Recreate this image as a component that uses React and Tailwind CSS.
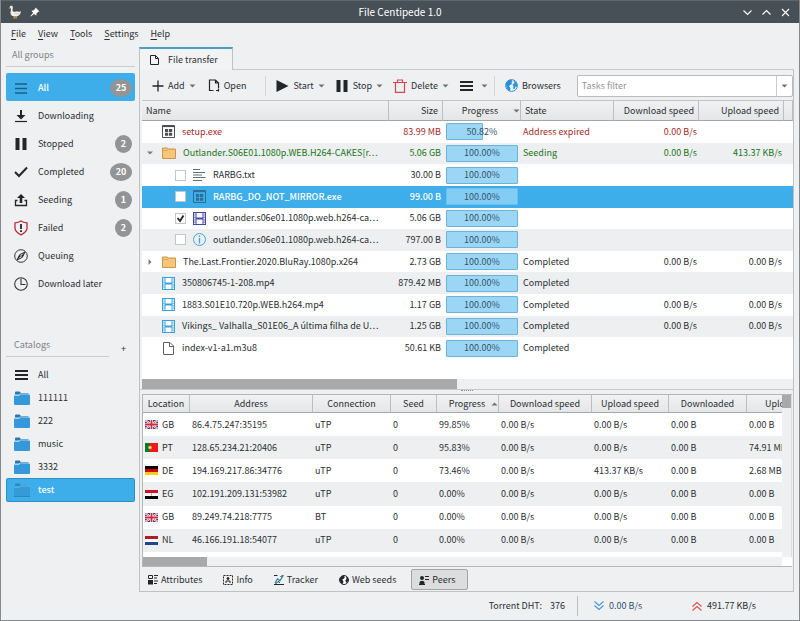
import React from 'react';
import clsx from 'clsx';

const GROUPS = [
  { name: 'All', icon: MenuIcon, count: 25, active: true },
  { name: 'Downloading', icon: DownloadIcon },
  { name: 'Stopped', icon: PauseIcon, count: 2 },
  { name: 'Completed', icon: CheckIcon, count: 20 },
  { name: 'Seeding', icon: SeedIcon, count: 1 },
  { name: 'Failed', icon: ShieldIcon, count: 2 },
  { name: 'Queuing', icon: CompassIcon },
  { name: 'Download later', icon: ClockIcon },
];

const CATALOGS = [
  { name: 'All', icon: BoldMenuIcon },
  { name: '111111', icon: BlueFolderIcon },
  { name: '222', icon: BlueFolderIcon },
  { name: 'music', icon: BlueFolderIcon },
  { name: '3332', icon: BlueFolderIcon },
  { name: 'test', icon: BlueFolderIcon, active: true },
];

const TASKS = [
  { name: 'setup.exe', icon: ExeIcon, size: '83.99 MB', progress: 50.82, state: 'Address expired', down: '0.00 B/s', color: 'text-[#a52a2a]' },
  { name: 'Outlander.S06E01.1080p.WEB.H264-CAKES[r⋯', icon: FolderIcon, arrow: 'down', size: '5.06 GB', progress: 100, state: 'Seeding', down: '0.00 B/s', up: '413.37 KB/s', color: 'text-[#1b741b]' },
  { name: 'RARBG.txt', icon: TextIcon, child: true, size: '30.00 B', progress: 100 },
  { name: 'RARBG_DO_NOT_MIRROR.exe', icon: ExeIcon, child: true, selected: true, size: '99.00 B', progress: 100 },
  { name: 'outlander.s06e01.1080p.web.h264-ca⋯', icon: DarkFilmIcon, child: true, checked: true, size: '5.06 GB', progress: 100 },
  { name: 'outlander.s06e01.1080p.web.h264-ca⋯', icon: InfoIcon, child: true, size: '797.00 B', progress: 100 },
  { name: 'The.Last.Frontier.2020.BluRay.1080p.x264', icon: FolderIcon, arrow: 'right', size: '2.73 GB', progress: 100, state: 'Completed', down: '0.00 B/s', up: '0.00 B/s' },
  { name: '350806745-1-208.mp4', icon: FilmIcon, size: '879.42 MB', progress: 100, state: 'Completed' },
  { name: '1883.S01E10.720p.WEB.h264.mp4', icon: FilmIcon, size: '1.17 GB', progress: 100, state: 'Completed', down: '0.00 B/s', up: '0.00 B/s' },
  { name: 'Vikings_ Valhalla_S01E06_A última filha de U⋯', icon: FilmIcon, size: '1.25 GB', progress: 100, state: 'Completed', down: '0.00 B/s', up: '0.00 B/s' },
  { name: 'index-v1-a1.m3u8', icon: PageIcon, size: '50.61 KB', progress: 100, state: 'Completed' },
];

const PEERS = [
  ['GB', '86.4.75.247:35195', 'uTP', '0', '99.85%', '0.00 B/s', '0.00 B/s', '0.00 B', '0.00 B'],
  ['PT', '128.65.234.21:20406', 'uTP', '0', '95.83%', '0.00 B/s', '0.00 B/s', '0.00 B', '74.91 MB'],
  ['DE', '194.169.217.86:34776', 'uTP', '0', '73.46%', '0.00 B/s', '413.37 KB/s', '0.00 B', '2.68 MB'],
  ['EG', '102.191.209.131:53982', 'uTP', '0', '0.00%', '0.00 B/s', '0.00 B/s', '0.00 B', '0.00 B'],
  ['GB', '89.249.74.218:7775', 'BT', '0', '0.00%', '0.00 B/s', '0.00 B/s', '0.00 B', '0.00 B'],
  ['NL', '46.166.191.18:54077', 'uTP', '0', '0.00%', '0.00 B/s', '0.00 B/s', '0.00 B', '0.00 B'],
];

const DETAIL_TABS = [
  { name: 'Attributes', icon: AttributesIcon },
  { name: 'Info', icon: CardIcon },
  { name: 'Tracker', icon: TrackerIcon },
  { name: 'Web seeds', icon: DarkGlobeIcon },
  { name: 'Peers', icon: PeersIcon, active: true },
];

const App = () => (
  <div className="min-h-screen flex flex-col bg-[#eff0f1] border-l border-r border-b border-[#85898c] text-[#2b2f33] text-[9px] leading-4 font-['Noto_Sans_CJK_SC','Noto_Sans',sans-serif] whitespace-nowrap cursor-default">
    <TitleBar />
    <MenuBar />
    <div className="flex-1 flex">
      <Sidebar />
      <main className="flex-1 min-w-0 flex flex-col pr-[5px]">
        <div className="flex">
          <button className="h-[23px] w-[94px] flex items-center gap-1.5 pl-2 border-t-2 border-t-[#4a9fc0] border-x border-x-[#bfc1c3] bg-[#f2f3f4]">
            <PageTabIcon />
            File transfer
          </button>
          <div className="flex-1 border-b border-[#c6c8ca]" />
        </div>
        <div className="flex-1 flex flex-col border-x border-b border-[#bfc1c3]">
          <Toolbar />
          <TaskTable />
          <div className="h-[5px] flex justify-center border-t border-[#c6c8ca]">
            <span className="w-3 h-px border-t border-dotted border-[#8b8f92]" />
          </div>
          <PeerTable />
          <DetailTabs />
        </div>
      </main>
    </div>
    <StatusBar />
  </div>
);

function TitleBar() {
  return (
    <header className="h-[23px] grid grid-cols-3 items-center bg-[#475057] border-t border-[#5c656b] text-white">
      <div className="flex items-center gap-2 pl-[7px]">
        <GooseIcon />
        <PinIcon />
      </div>
      <h1 className="text-center text-[10px]">File Centipede 1.0</h1>
      <div className="flex justify-end gap-2 pr-2">
        <WindowButton label="Minimize" d="M1.500 3.500 5.500 7.500 9.500 3.500" />
        <WindowButton label="Maximize" d="M1.500 7.500 5.500 3.500 9.500 7.500" />
        <WindowButton label="Close" d="M2 2 9 9M9 2 2 9" />
      </div>
    </header>
  );
}

function WindowButton({ label, d }) {
  return (
    <button aria-label={label}>
      <svg width="11" height="11" viewBox="0 0 11 11" fill="none" stroke="#fff" strokeWidth="1.1">
        <path d={d} />
      </svg>
    </button>
  );
}

function MenuBar() {
  return (
    <nav className="h-6 flex items-center gap-3 pl-2.5 pb-[3px]">
      {['File', 'View', 'Tools', 'Settings', 'Help'].map((item) => (
        <button key={item}>
          <span className="underline underline-offset-2">{item[0]}</span>
          {item.slice(1)}
        </button>
      ))}
    </nav>
  );
}

function Sidebar() {
  return (
    <aside className="w-[138px] shrink-0 pl-[5px] pr-1">
      <h2 className="h-5 pl-1.5 border-b border-[#c9cbcd] text-[#808487]">All groups</h2>
      <ul className="mt-1.5">
        {GROUPS.map(({ name, icon: Icon, count, active }) => (
          <li key={name}>
            <button
              className={clsx(
                'w-full h-7 flex items-center gap-2.5 pl-2 pr-[3px] pt-px rounded-xs',
                active && 'bg-[#3daee9] text-white font-medium'
              )}
            >
              <Icon />
              <span className="flex-1 text-left">{name}</span>
              {count && (
                <span
                  className={clsx(
                    'h-[18px] grid place-items-center rounded-[50%] bg-[#939495] text-white font-bold',
                    count > 9 ? 'w-[22px]' : 'w-[17px]'
                  )}
                >
                  {count}
                </span>
              )}
            </button>
          </li>
        ))}
      </ul>
      <div className="mt-10 flex items-end">
        <h2 className="w-[103px] h-5 pl-2 border-b border-[#c9cbcd] text-[#808487]">Catalogs</h2>
        <button className="ml-3" aria-label="Add catalog">+</button>
      </div>
      <ul className="mt-1.5">
        {CATALOGS.map(({ name, icon: Icon, active }) => (
          <li key={name}>
            <button
              className={clsx(
                'w-full flex items-center gap-2 pl-[7px] rounded-xs',
                active ? 'h-6 bg-[#3daee9] border border-[#2f8fc4] text-white font-medium' : 'h-[23px] border-x border-transparent'
              )}
            >
              <span className="w-4">
                <Icon dim={active} />
              </span>
              {name}
            </button>
          </li>
        ))}
      </ul>
    </aside>
  );
}

function Toolbar() {
  return (
    <div className="h-[30px] flex items-center pl-3 pt-px">
      <ToolButton icon={PlusIcon} label="Add" menu />
      <ToolButton icon={OpenIcon} label="Open" className="ml-3" />
      <Separator className="ml-[19px]" />
      <ToolButton icon={PlayIcon} label="Start" menu className="ml-2.5" />
      <ToolButton icon={PauseIcon} label="Stop" menu className="ml-2.5" />
      <ToolButton icon={TrashIcon} label="Delete" menu className="ml-2.5" />
      <button className="ml-2.5 flex items-center gap-2" aria-label="Priority">
        <BoldMenuIcon />
        <Caret />
      </button>
      <Separator className="ml-1.5" />
      <ToolButton icon={GlobeIcon} label="Browsers" className="ml-2.5" />
      <div className="ml-4 flex-1 flex h-[22px] border border-[#b9bcbe] rounded-xs bg-white">
        <input
          className="flex-1 min-w-0 px-1 outline-none placeholder:text-[#92969a]"
          placeholder="Tasks filter"
          aria-label="Tasks filter"
        />
        <button className="w-4 grid place-items-center border-l border-[#c9cbcd]" aria-label="Filter history">
          <Caret />
        </button>
      </div>
    </div>
  );
}

function ToolButton({ icon: Icon, label, menu, className }) {
  return (
    <button className={clsx('flex items-center gap-1', className)}>
      <Icon />
      {label}
      {menu && <Caret />}
    </button>
  );
}

function Separator({ className }) {
  return <span className={clsx('w-px h-5 bg-[#d3d5d7]', className)} />;
}

const taskHead = 'h-[21px] font-normal border-r border-b border-t border-r-[#bcbfc1] border-b-[#a3a6a8] border-t-[#c3c5c7]';

function TaskTable() {
  return (
    <div className="flex-1 flex flex-col ml-0.5 bg-white">
      <table className="w-full h-[259px] table-fixed border-separate border-spacing-0">
        <colgroup>
          <col />
          <col className="w-[54px]" />
          <col className="w-[78px]" />
          <col className="w-[93px]" />
          <col className="w-[85px]" />
          <col className="w-[85px]" />
          <col className="w-[9px]" />
        </colgroup>
        <thead className="bg-linear-to-b from-[#f1f2f3] to-[#e3e5e6]">
          <tr>
            <th className={clsx(taskHead, 'pl-1 text-left')}>Name</th>
            <th className={clsx(taskHead, 'pr-1 text-right')}>Size</th>
            <th className={taskHead}>
              <span className="flex items-center">
                <span className="flex-1 pl-1">Progress</span>
                <Caret />
              </span>
            </th>
            <th className={clsx(taskHead, 'pl-1 text-left')}>State</th>
            <th className={clsx(taskHead, 'pr-1 text-right')}>Download speed</th>
            <th className={clsx(taskHead, 'pr-1 text-right')}>Upload speed</th>
            <th className={taskHead} />
          </tr>
        </thead>
        <tbody>
          {TASKS.map((task, i) => (
            <TaskRow key={i} id={`task-${i}`} task={task} />
          ))}
        </tbody>
      </table>
      <div className="flex-1" />
      <div className="h-2.5 bg-[#eff0f1]">
        <div className="h-full w-[315px] bg-[#a9a9a9]" />
      </div>
    </div>
  );
}

function TaskRow({ id, task }) {
  const { name, icon: Icon, arrow, child, checked, selected, size, progress, state, down, up, color } = task;
  return (
    <tr className={clsx(selected ? 'bg-[#3daee9] text-white font-medium' : 'even:bg-[#edeff0]', color)}>
      <td className="p-0">
        <div className={clsx('flex items-center', child ? 'pl-[33px]' : 'pl-1')}>
          {child ? (
            <span className="grid mr-[7px]">
              <input
                id={id}
                type="checkbox"
                defaultChecked={checked}
                className="peer col-start-1 row-start-1 appearance-none size-[11px] bg-white border border-[#c3c6c9]"
              />
              <svg className="col-start-1 row-start-1 hidden peer-checked:block pointer-events-none" width="11" height="11" fill="none" stroke="#222" strokeWidth="1.8">
                <path d="M2.500 5 5 8 8.500 2.500" />
              </svg>
            </span>
          ) : (
            <span className="w-4 shrink-0">{arrow && <TreeArrow dir={arrow} />}</span>
          )}
          <Icon dim={selected} />
          <label htmlFor={child ? id : undefined} className="pl-[7px]">{name}</label>
        </div>
      </td>
      <td className="p-0 pr-0.5 text-right">{size}</td>
      <td className="p-0 px-[3px]">
        <div className="grid w-[72px] h-[17px] items-center">
          <span
            className={clsx(
              'col-start-1 row-start-1 h-full border rounded-[1px]',
              selected ? 'bg-[#83cdf5] border-[#6cc0ee]' : 'bg-[#9bd7f5] border-[#6cb3dc]'
            )}
            style={{ width: `${progress}%` }}
          />
          <span className="col-start-1 row-start-1 text-center font-normal text-[#34536b]">{progress.toFixed(2)}%</span>
        </div>
      </td>
      <td className="p-0 pl-0.5">{state}</td>
      <td className="p-0 pr-0.5 text-right">{down}</td>
      <td className="p-0 pr-0.5 text-right">{up}</td>
      <td className="p-0" />
    </tr>
  );
}

const peerHead = 'h-[18px] p-0 font-normal border-r border-b border-r-[#bcbfc1] border-b-[#a3a6a8]';

function PeerTable() {
  return (
    <div className="ml-0.5 mr-px flex flex-col border-l border-t border-b border-[#b4b7b9] bg-white">
      <div className="flex">
        <div className="flex-1 min-w-0 h-[162px] overflow-hidden">
          <table className="w-full min-w-[682px] h-[157px] table-fixed border-separate border-spacing-0">
            <colgroup>
              <col className="w-[47px]" />
              <col className="w-[123px]" />
              <col className="w-[78px]" />
              <col className="w-[46px]" />
              <col className="w-[62px]" />
              <col className="w-[93px]" />
              <col className="w-[77px]" />
              <col className="w-[78px]" />
              <col className="w-[78px]" />
            </colgroup>
            <thead className="bg-linear-to-b from-[#f1f2f3] to-[#e3e5e6]">
              <tr>
                <th className={peerHead}>Location</th>
                <th className={peerHead}>Address</th>
                <th className={peerHead}>Connection</th>
                <th className={peerHead}>Seed</th>
                <th className={peerHead}>
                  <span className="flex items-center">
                    <span className="flex-1 pl-1.5">Progress</span>
                    <Caret up />
                  </span>
                </th>
                <th className={peerHead}>Download speed</th>
                <th className={peerHead}>Upload speed</th>
                <th className={peerHead}>Downloaded</th>
                <th className={peerHead}>Uploaded</th>
              </tr>
            </thead>
            <tbody>
              {PEERS.map(([country, ...cells]) => (
                <tr key={cells[0]} className="even:bg-[#edeff0]">
                  <td className="p-0 pl-0.5">
                    <span className="flex items-center gap-1">
                      <Flag country={country} />
                      {country}
                    </span>
                  </td>
                  {cells.map((cell, i) => (
                    <td key={i} className="p-0 pl-0.5">{cell}</td>
                  ))}
                </tr>
              ))}
            </tbody>
          </table>
        </div>
        <div className="w-2.5 bg-[#eff0f1] border-r border-[#dcdee0]">
          <div className="h-[13px] bg-[#a9a9a9]" />
        </div>
      </div>
      <div className="h-[9px] bg-[#eff0f1] flex justify-between">
        <div className="w-16 bg-[#a9a9a9]" />
        <div className="w-2.5 bg-white" />
      </div>
    </div>
  );
}

function DetailTabs() {
  return (
    <div className="h-6 flex items-center gap-1 pl-0.5 pt-px">
      {DETAIL_TABS.map(({ name, icon: Icon, active }) => (
        <button
          key={name}
          className={clsx(
            'h-[21px] flex items-center gap-[3px] border rounded-xs',
            active ? 'pl-[7px] pr-3 bg-[#dcddde] border-[#a2a5a7]' : 'pl-[5px] pr-2.5 border-transparent'
          )}
        >
          <Icon />
          {name}
        </button>
      ))}
    </div>
  );
}

function StatusBar() {
  return (
    <footer className="h-7 flex items-center justify-end pr-[43px]">
      <span>Torrent DHT:</span>
      <span className="ml-2">376</span>
      <span className="ml-3 w-px h-5 bg-[#bcbfc1]" />
      <span className="ml-4 flex items-center gap-[5px] w-[98px] text-[#2b5478]">
        <DoubleChevron color="#3d9bd1" />
        0.00 B/s
      </span>
      <span className="flex items-center gap-[5px]">
        <DoubleChevron color="#d9534f" up />
        491.77 KB/s
      </span>
    </footer>
  );
}

/* ---- small glyphs ---- */

function Caret({ up }) {
  return (
    <svg className="shrink-0" width="7" height="4" viewBox="0 0 7 4" fill="#6f7376">
      <path d={up ? 'M.5 3.500h6l-3-3z' : 'M.5 .5h6l-3 3z'} />
    </svg>
  );
}

function TreeArrow({ dir }) {
  return (
    <svg width="8" height="8" viewBox="0 0 8 8" fill="#777b7e">
      <path d={dir === 'down' ? 'M1 2.500h6l-3 3z' : 'M2.500 1v6l3-3z'} />
    </svg>
  );
}

function DoubleChevron({ color, up }) {
  return (
    <svg width="10" height="10" viewBox="0 0 10 10" fill="none" stroke={color} strokeWidth="1.1">
      <path d={up ? 'M.5 5.500 5 1.500 9.500 5.500M.5 9.500 5 5.500 9.500 9.500' : 'M.5 .5 5 4.500 9.500 .5M.5 4.500 5 8.500 9.500 4.500'} />
    </svg>
  );
}

/* ---- icons ---- */

function Svg({ children, w = 14, h = 14, ...rest }) {
  return (
    <svg className="shrink-0" width={w} height={h} viewBox={`0 0 ${w} ${h}`} fill="none" {...rest}>
      {children}
    </svg>
  );
}

function GooseIcon() {
  return (
    <Svg>
      <path d="M1.800 2C2 .3 4.600.3 4.800 2 5 4 4 5.500 5 6.500c1.800.6 4-.2 5.500.2 1 .3 1.800 0 2.500-.4-.2 2.700-2 5-5 5.200C5 11.700 2.500 10.500 2.500 8c0-2 .8-3 .3-4.500z" fill="#f3efe4" />
      <path d="M2 2 .3 3.200 2.400 3.800z" fill="#e8943a" />
      <path d="M6.500 11.300v1.700H5M8.500 11.300v1.700H7" stroke="#e8943a" />
      <path d="M6.500 8.300c1.500 1 3.500.8 5-.3" stroke="#c9c2b2" strokeWidth=".8" />
    </Svg>
  );
}

function PinIcon() {
  return (
    <Svg w={10} h={10}>
      <path d="M5.500.5 9.500 4.500 8.300 4.800 6.500 6.600 6.300 8.500 3.900 6.900 1 9.500.5 9 3.100 6.100 1.500 3.700l1.900-.2L5.200 1.700z" fill="#fff" />
    </Svg>
  );
}

function PageTabIcon() {
  return (
    <Svg w={14} h={12} stroke="#222">
      <path d="M2.500 1.500h5l3 3v6h-8zM7.500 1.500v3h3" />
    </Svg>
  );
}

function MenuIcon() {
  return (
    <Svg stroke="#1c5f86" strokeWidth="1.3">
      <path d="M1 3h12M1 7.500h12M1 12h12" />
    </Svg>
  );
}

function BoldMenuIcon() {
  return (
    <Svg stroke="#232629" strokeWidth="2">
      <path d="M1 3h13M1 7h13M1 11h13" />
    </Svg>
  );
}

function DownloadIcon() {
  return (
    <Svg>
      <path d="M6 1h2v5h3.500L7 10.500 2.500 6H6z" fill="#232629" />
      <path d="M1 12.500h12" stroke="#232629" strokeWidth="1.200" />
    </Svg>
  );
}

function PauseIcon() {
  return (
    <Svg>
      <path d="M1.500 1H5.500V13H1.500zM8.500 1H12.500V13H8.500z" fill="#232629" />
    </Svg>
  );
}

function CheckIcon() {
  return (
    <Svg stroke="#232629" strokeWidth="2">
      <path d="M1 7 5 11 13 2.500" />
    </Svg>
  );
}

function SeedIcon() {
  return (
    <Svg>
      <path d="M7 1 11 5H8.300V10H5.700V5H3z" fill="#232629" />
      <path d="M3.500 7.500h-2v5h11v-5h-2" stroke="#232629" strokeWidth="1.300" />
    </Svg>
  );
}

function ShieldIcon() {
  return (
    <Svg h={16}>
      <path d="M7 1c1.800 1.300 3.800 1.700 6 1.800V8c0 3.300-2.800 5.300-6 6.800C3.800 13.300 1 11.300 1 8V2.800C3.200 2.700 5.200 2.300 7 1z" stroke="#c0283c" strokeWidth="1.300" />
      <path d="M7 4v5M7 10.300v1.700" stroke="#232629" strokeWidth="1.800" />
    </Svg>
  );
}

function CompassIcon() {
  return (
    <Svg>
      <circle cx="7" cy="7" r="6.300" stroke="#333639" />
      <path d="M11 3 8.300 8.300 3 11 5.700 5.700z" stroke="#232629" />
      <path d="M11 3 8.300 8.300 7 7z" fill="#232629" />
      <path d="M3 11 5.700 5.700 7 7z" fill="#232629" />
    </Svg>
  );
}

function ClockIcon() {
  return (
    <Svg stroke="#333639" strokeWidth="1.100">
      <circle cx="7" cy="7" r="6.300" />
      <path d="M7 1.500V7.500H11.500" />
    </Svg>
  );
}

function BlueFolderIcon({ dim }) {
  return (
    <Svg w={16} h={14}>
      <path d="M1 1.500Q1 .5 2 .5H5.500L7 2H14.500V4H1z" fill={dim ? '#2f88bd' : '#2a78ad'} />
      <path d="M0 4.500H5L6.500 3.500H15Q16 3.500 16 4.500V13Q16 14 15 14H1Q0 14 0 13z" fill={dim ? '#369bd4' : '#3498db'} />
      <path d="M.5 4H5L6.500 3H15.500" stroke={dim ? '#68c1f0' : '#bfe0f6'} />
      {dim && <path d="M0 13.500H16" stroke="#2f88bd" />}
    </Svg>
  );
}

function PlusIcon() {
  return (
    <Svg w={12} h={12} stroke="#232629" strokeWidth="1.300">
      <path d="M6 .5V11.500M.5 6H11.500" />
    </Svg>
  );
}

function OpenIcon() {
  return (
    <Svg w={12} h={13} stroke="#232629" strokeWidth="1.200">
      <path d="M5.500 11.500H1.500V1H7.500L10.500 4V9M7.500 1V4H10.500M8 11.500H11M10.500 9.500V12.500" />
    </Svg>
  );
}

function PlayIcon() {
  return (
    <Svg w={13} h={12}>
      <path d="M.5 0 12.500 6 .5 12z" fill="#232629" />
    </Svg>
  );
}

function TrashIcon() {
  return (
    <Svg stroke="#da4453" strokeWidth="1.200">
      <path d="M0 3.500H14M4.500 3V1H9.500V3M2.500 3.500V13.400H11.500V3.500" />
    </Svg>
  );
}

function GlobeIcon() {
  return (
    <Svg w={13} h={13}>
      <circle cx="6.500" cy="6.500" r="5.900" fill="#e8f4fc" stroke="#2d8fd8" />
      <path d="M1 4.500C2 2 4 .8 6 .8L7.500 2 6.500 3.500 7 5 5 6 4 7.500 5.500 9 5 12C2.500 11 .7 8.500 1 4.500zM8.500 1.500C11 2.500 12.500 5 12 8L10.500 7.500 9.500 10 8 9.500 8.500 7 7.500 5.500 9.500 4z" fill="#2d8fd8" />
    </Svg>
  );
}

function ExeIcon({ dim }) {
  const c = dim ? '#2d6d96' : '#4a4f53';
  return (
    <Svg w={13} h={13}>
      <path d="M.5 .5H12.500V12.500H.5z" stroke={c} />
      <path d="M.5 1.300H12.500" stroke={c} strokeWidth="1.600" />
      <path d="M3 4H6.200V7H3zM7 4H10.200V7H7zM3 7.700H6.200V10.700H3zM7 7.700H10.200V10.700H7z" fill={c} />
    </Svg>
  );
}

function FolderIcon() {
  return (
    <Svg w={14} h={12}>
      <path d="M.5 1H5L6.500 2H13.500V11.500H.5z" fill="#f5c67b" stroke="#c89648" />
      <path d="M.5 3.500H5L6.500 2.500H13.500" stroke="#dba958" />
    </Svg>
  );
}

function TextIcon() {
  return (
    <Svg w={13} h={12} stroke="#5f7078">
      <path d="M0 .5H7M0 3.500H12M0 6H9M0 8.500H12.500M0 11.500H9" />
    </Svg>
  );
}

function FilmShape({ color }) {
  return (
    <Svg w={13} h={13}>
      <path d="M.5 .5H12.500V12.500H.5z" fill="#fff" stroke={color} strokeWidth="1.200" />
      <path d="M3 0V13M10 0V13" stroke={color} />
      <path d="M3 6.500H10" stroke={color} strokeWidth="2" />
      <path d="M1.500 0V13M11.500 0V13" stroke={color} strokeWidth="2" strokeDasharray="1.200 1.200" opacity=".6" />
    </Svg>
  );
}

function FilmIcon() {
  return <FilmShape color="#3aa0dc" />;
}

function DarkFilmIcon() {
  return <FilmShape color="#4248a8" />;
}

function InfoIcon() {
  return (
    <Svg w={13} h={13} stroke="#3aa5d8">
      <circle cx="6.500" cy="6.500" r="6" />
      <path d="M6.500 5V10.500M6.500 2.500V4" strokeWidth="1.300" />
    </Svg>
  );
}

function PageIcon() {
  return (
    <Svg w={13} h={13} stroke="#5a5f63">
      <path d="M1.500 .5H8L11.500 4V12.500H1.500zM7.500 .5V4.500H11.500" />
    </Svg>
  );
}

function AttributesIcon() {
  return (
    <Svg w={10} h={10} stroke="#232629">
      <path d="M.5 .5H4.500V3.500H.5zM6 .5H10M6 3H9M6 6H10M6 8.500H9" />
      <path d="M0 5H5V9.500H0z" fill="#232629" stroke="none" />
    </Svg>
  );
}

function CardIcon() {
  return (
    <Svg w={10} h={10} stroke="#232629">
      <path d="M.5 .5H9.500V9.500H.5z" strokeDasharray="2 1" />
      <circle cx="5" cy="3.500" r="1" fill="#232629" />
      <path d="M3 8V6H7V8" />
    </Svg>
  );
}

function TrackerIcon() {
  return (
    <Svg w={10} h={10} stroke="#232629">
      <path d="M0 .5H3.500M0 9.500H10M9.500 .5 6.500 1.500" />
      <path d="M1 8 3.500 4 6 5.500 9 1" stroke="#2a8ca0" strokeWidth="1.300" />
      <path d="M1 9.500 4 6.500 6 7.500" />
    </Svg>
  );
}

function DarkGlobeIcon() {
  return (
    <Svg w={10} h={10}>
      <circle cx="5" cy="5" r="4.500" fill="#fff" stroke="#232629" />
      <path d="M.7 4C1.500 1.800 3 .7 5 .7L5.800 2.200 4.800 3.800 3.200 4.500 4.500 6.500 3.800 9C1.800 8 .5 6.500 .7 4zM7 1.300C8.800 2.200 9.500 4 9.200 6L7.300 8 6.300 5.500 7.500 4z" fill="#232629" />
    </Svg>
  );
}

function PeersIcon() {
  return (
    <Svg w={10} h={10}>
      <circle cx="3" cy="3" r="2" fill="#232629" />
      <path d="M.5 9V7.500Q.5 5.800 3 5.800T5.500 7.500V9z" fill="#232629" />
      <path d="M6 1.500H10M6 4.500H10M0 9.500H6" stroke="#232629" />
    </Svg>
  );
}

function Flag({ country }) {
  return (
    <Svg w={13} h={9}>
      {country === 'GB' && (
        <>
          <path d="M0 0H13V9H0z" fill="#2b3d80" />
          <path d="M0 0 13 9M13 0 0 9" stroke="#fff" strokeWidth="2" />
          <path d="M0 0 13 9M13 0 0 9" stroke="#cf2b3f" strokeWidth=".7" />
          <path d="M6.500 0V9M0 4.500H13" stroke="#fff" strokeWidth="3.200" />
          <path d="M6.500 0V9M0 4.500H13" stroke="#cf2b3f" strokeWidth="1.800" />
        </>
      )}
      {country === 'PT' && (
        <>
          <path d="M0 0H5V9H0z" fill="#11752b" />
          <path d="M5 0H13V9H5z" fill="#f01818" />
          <circle cx="5" cy="4.500" r="1.600" fill="#f5e28c" stroke="#d9a520" strokeWidth=".6" />
        </>
      )}
      {country === 'DE' && (
        <>
          <path d="M0 0H13V3H0z" fill="#000" />
          <path d="M0 3H13V6H0z" fill="#d40000" />
          <path d="M0 6H13V9H0z" fill="#ffcc1a" />
        </>
      )}
      {country === 'EG' && (
        <>
          <path d="M0 0H13V3H0z" fill="#ce1126" />
          <path d="M0 3H13V6H0z" fill="#fff" />
          <path d="M0 6H13V9H0z" fill="#000" />
          <path d="M6 3.300H7V5.800H6z" fill="#c9a24a" />
        </>
      )}
      {country === 'NL' && (
        <>
          <path d="M0 0H13V3H0z" fill="#ae1c28" />
          <path d="M0 3H13V6H0z" fill="#fff" />
          <path d="M0 6H13V9H0z" fill="#21468b" />
        </>
      )}
    </Svg>
  );
}

export default App;
